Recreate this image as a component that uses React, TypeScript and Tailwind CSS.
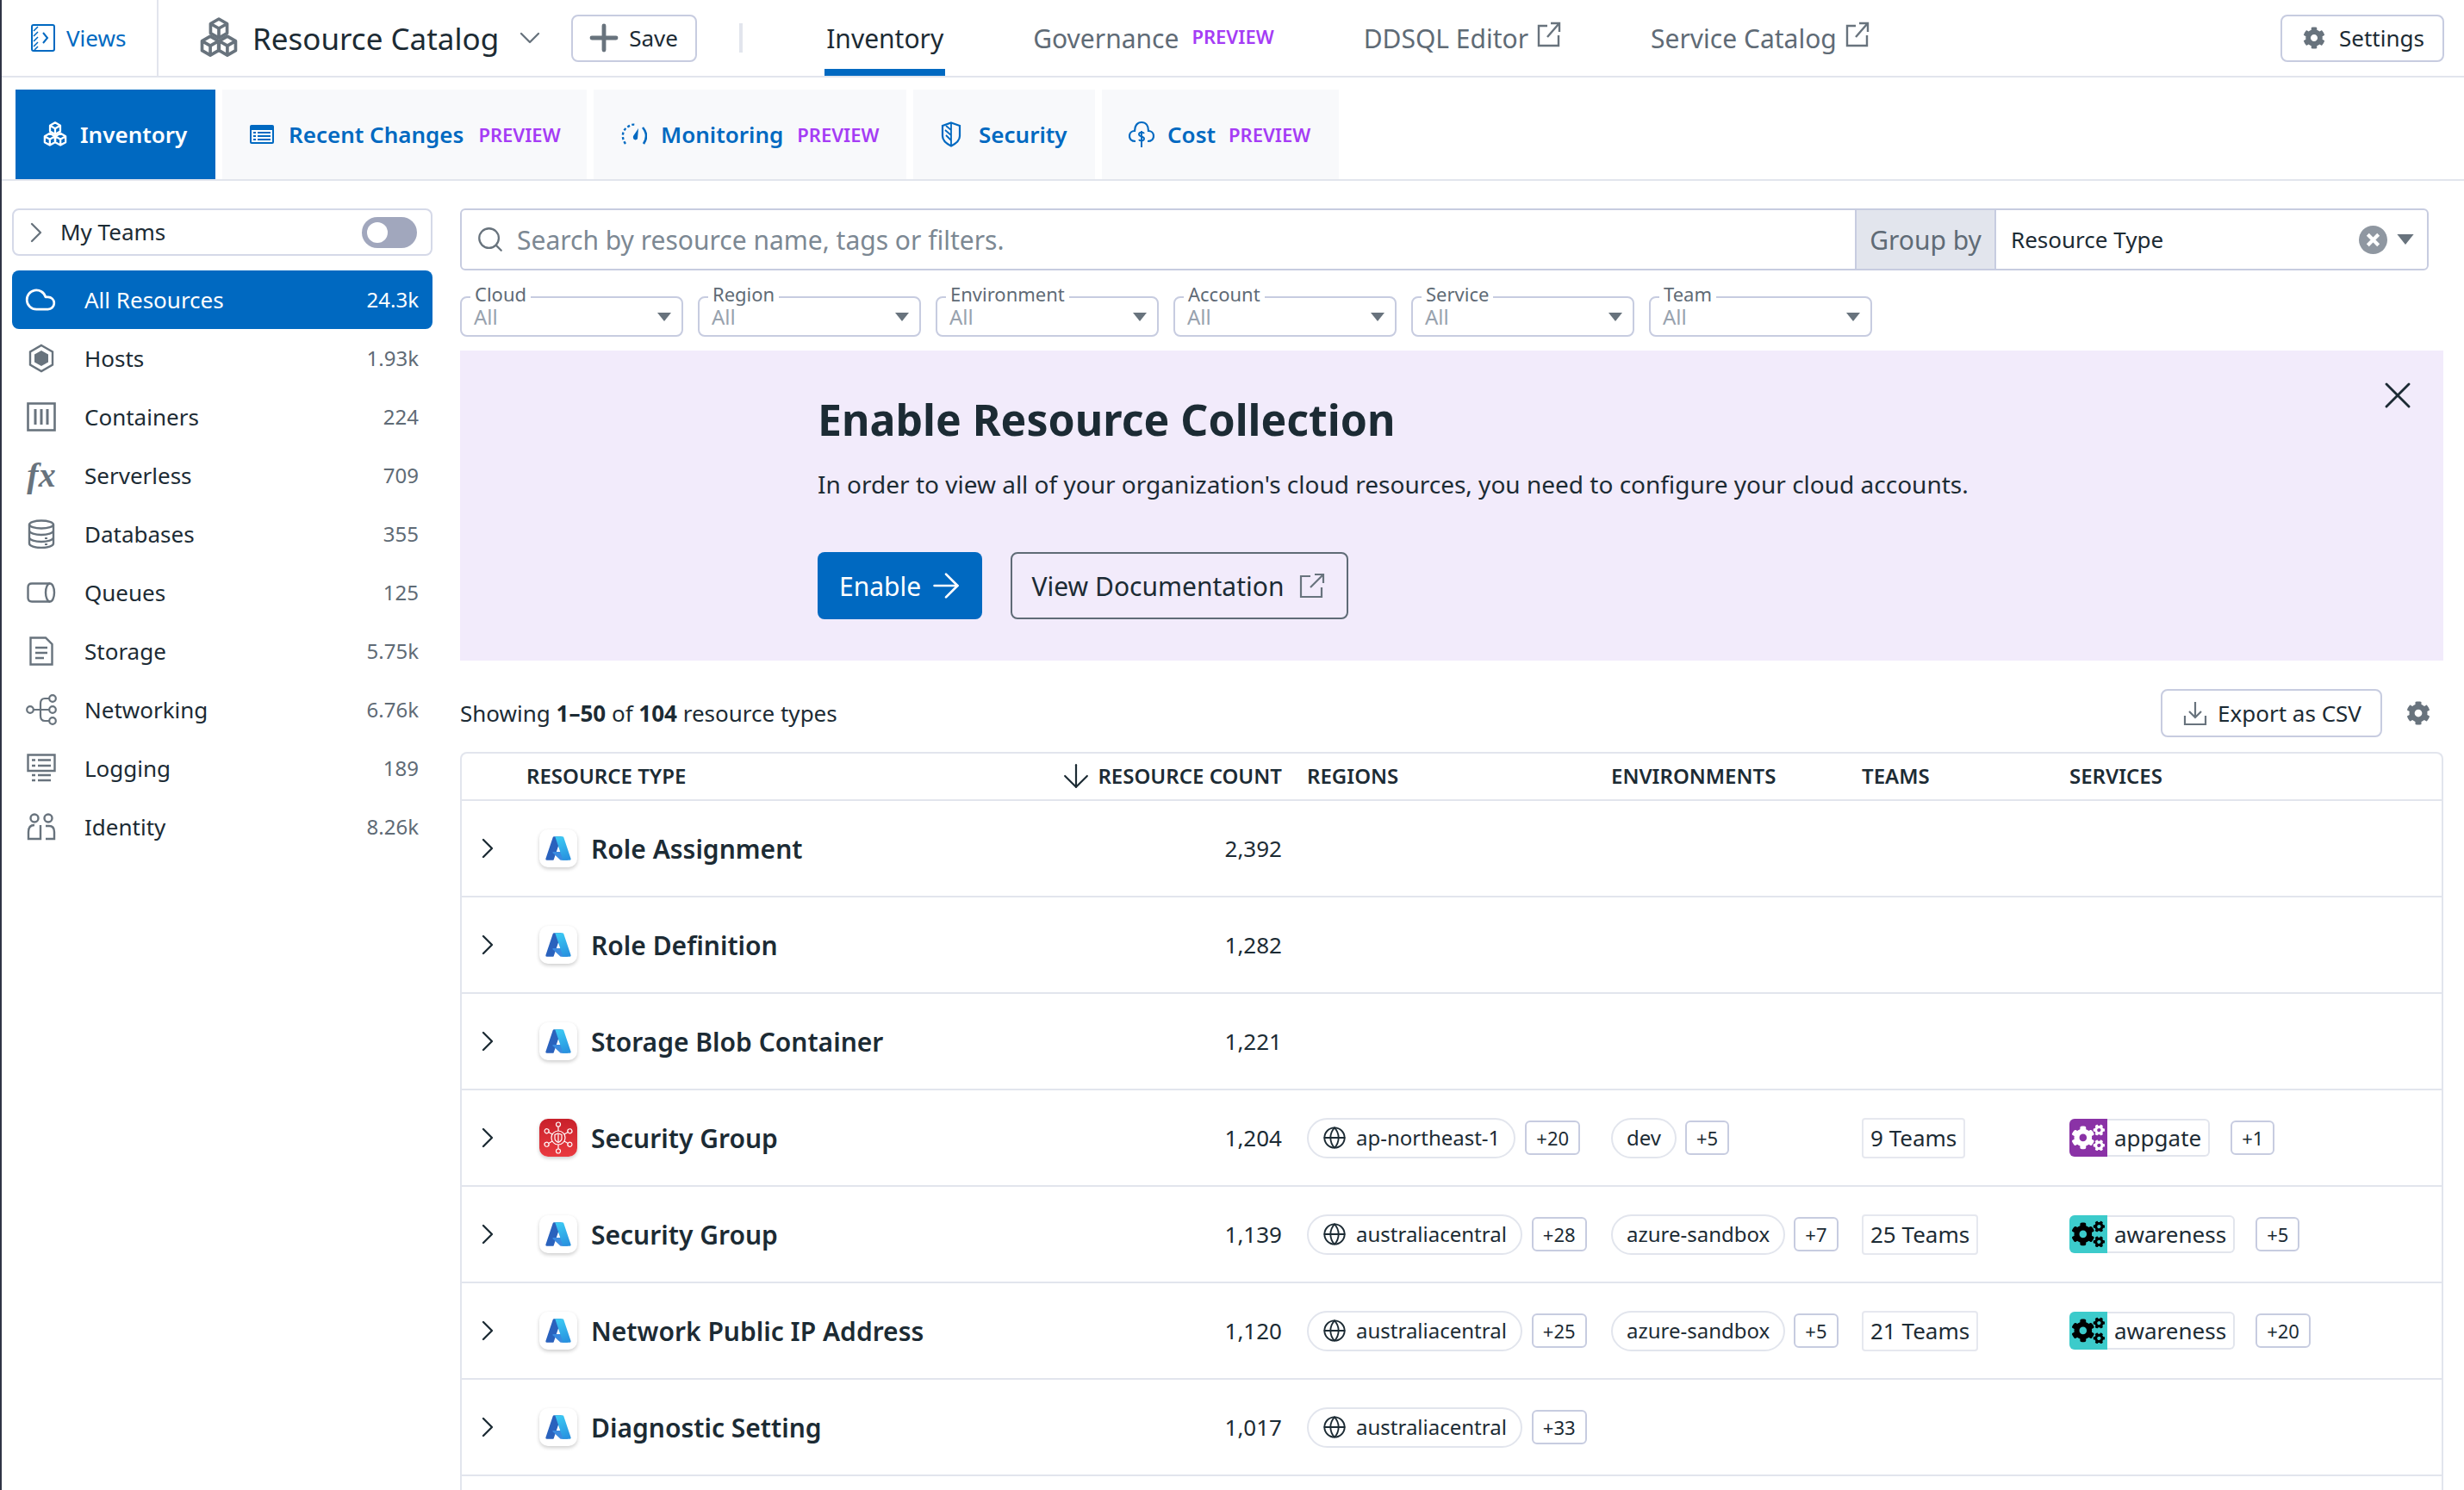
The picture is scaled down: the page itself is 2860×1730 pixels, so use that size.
import { ChevronDown, ChevronRight, Cloud, Globe, Plus, Search, X, ArrowRight, ArrowDown } from "lucide-react";
import { FaCog, FaCogs } from "react-icons/fa";

const ink = "text-[#1c2b34]";

function cubePath(cx: number, cy: number, r: number) {
  const w = r * 0.87;
  const h = r * 0.5;
  return `M${cx} ${cy - r}L${cx + w} ${cy - h}V${cy + h}L${cx} ${cy + r}L${cx - w} ${cy + h}V${cy - h}Z M${cx - w} ${cy - h}L${cx} ${cy}L${cx + w} ${cy - h} M${cx} ${cy}V${cy + r}`;
}

function CubesIcon({ className }: { className?: string }) {
  return (
    <svg viewBox="0 0 24 28" fill="none" stroke="currentColor" strokeWidth="2" strokeLinejoin="round" className={className}>
      <path d={cubePath(12, 8, 6)} />
      <path d={cubePath(6.6, 19, 6)} />
      <path d={cubePath(17.4, 19, 6)} />
    </svg>
  );
}

function ExternalIcon() {
  return (
    <svg viewBox="0 0 28 30" fill="none" stroke="#68737d" strokeWidth="2.4" className="w-[28px] h-[30px] mb-[8px] ml-[10px]">
      <path d="M12 5H2V28H25V16" />
      <path d="M12 18L25 3M16 2H26V12" />
    </svg>
  );
}

function Triangle({ className }: { className?: string }) {
  return (
    <svg viewBox="0 0 16 10" className={className}>
      <path d="M0 0H16L8 10Z" fill="#68737d" />
    </svg>
  );
}

function Preview() {
  return <span className="text-[22px] font-semibold text-[#a53cf5] leading-none">PREVIEW</span>;
}

function ViewsIcon() {
  return (
    <svg viewBox="0 0 28 32" fill="none" className="w-[28px] h-[32px]">
      <rect x="1" y="1" width="26" height="30" rx="2" stroke="#0069c1" strokeWidth="2" />
      <path d="M3 8L8 3M3 14L8 9M3 20L8 15M3 26L8 21M4 30L8 26" stroke="#0069c1" strokeWidth="1.5" />
      <path d="M14 10L19 16L14 22" stroke="#0069c1" strokeWidth="2" />
    </svg>
  );
}

function ListIcon() {
  return (
    <svg viewBox="0 0 28 22" className="w-[28px] h-[22px]">
      <rect width="28" height="22" rx="2" fill="#0069c1" />
      <rect x="2" y="6" width="24" height="14" fill="#fff" />
      <path d="M4 9H7M9 9H24M4 13H7M9 13H24M4 17H7M9 17H24" stroke="#0069c1" strokeWidth="2" />
    </svg>
  );
}

function GaugeIcon() {
  return (
    <svg viewBox="0 0 30 28" fill="none" className="w-[30px] h-[28px]">
      <path d="M5 25C0 18 1 9 8 5C11 3 14 2 17 3" stroke="#0069c1" strokeWidth="2.4" strokeDasharray="3 2.5" />
      <path d="M25 6C30 12 30 19 26 25" stroke="#0069c1" strokeWidth="2.6" />
      <path d="M20 7L14 16C13 20 17 22 19 19Z" fill="#0069c1" />
    </svg>
  );
}

function ShieldIcon() {
  return (
    <svg viewBox="0 0 24 30" fill="none" stroke="#0069c1" strokeWidth="2.2" className="w-[24px] h-[30px]">
      <path d="M12 1.5L22 5V17C22 23 17 26 12 28.5C7 26 2 23 2 17V5Z" />
      <path d="M12 2V28M12 10L6 5M12 16L5 10M12 22L6 16" strokeWidth="1.8" />
    </svg>
  );
}

function CostIcon() {
  return (
    <svg viewBox="0 0 30 32" fill="none" stroke="#0069c1" strokeWidth="2.2" className="w-[30px] h-[32px]">
      <path d="M8 24C3 24 1 21 1 18C1 14 4 12 7 12C7 6 10 2 15 2C20 2 23 6 23 12C26 12 29 14 29 18C29 21 27 24 22 24" />
      <path d="M18 15C17 13 12 13 12 16C12 19 18 18 18 21C18 24 13 24 12 22M15 12V26M15 26V31" strokeWidth="1.9" />
    </svg>
  );
}

const gray = "#68737d";

const sideIcons: Record<string, React.ReactNode> = {
  Hosts: (
    <svg viewBox="0 0 32 34" className="w-[32px] h-[34px]">
      <path d="M16 2L29 9.5V24.5L16 32L3 24.5V9.5Z" fill="none" stroke={gray} strokeWidth="2.4" />
      <path d="M16 8L24 12.5V21.5L16 26L8 21.5V12.5Z" fill={gray} />
    </svg>
  ),
  Containers: (
    <svg viewBox="0 0 34 34" fill="none" stroke={gray} className="w-[34px] h-[34px]">
      <rect x="1.5" y="1.5" width="31" height="31" strokeWidth="2.6" />
      <path d="M10 8V26M17 8V26M24 8V26" strokeWidth="3" />
    </svg>
  ),
  Databases: (
    <svg viewBox="0 0 32 34" fill="none" stroke={gray} strokeWidth="2.4" className="w-[32px] h-[34px]">
      <ellipse cx="16" cy="6" rx="14" ry="4.5" />
      <path d="M2 6V28C2 31 9 33 16 33C23 33 30 31 30 28V6M2 13C2 16 9 18 16 18C23 18 30 16 30 13M2 21C2 24 9 26 16 26C23 26 30 24 30 21" />
      <path d="M20 22H23M20 29H23" strokeWidth="2" />
    </svg>
  ),
  Queues: (
    <svg viewBox="0 0 34 24" fill="none" stroke={gray} strokeWidth="2.4" className="w-[34px] h-[24px]">
      <path d="M27 1.5H6C3 1.5 1.5 3 1.5 6V18C1.5 21 3 22.5 6 22.5H27" />
      <ellipse cx="27" cy="12" rx="5" ry="10.5" />
    </svg>
  ),
  Storage: (
    <svg viewBox="0 0 28 34" fill="none" stroke={gray} strokeWidth="2.4" className="w-[28px] h-[34px]">
      <path d="M1.5 1.5H19L26.5 9V32.5H1.5Z" />
      <path d="M7 13H21M7 19H21M7 25H17" />
    </svg>
  ),
  Networking: (
    <svg viewBox="0 0 36 36" fill="none" stroke={gray} strokeWidth="2.2" className="w-[36px] h-[36px]">
      <circle cx="5" cy="18" r="3.8" />
      <circle cx="31" cy="5" r="3.8" />
      <circle cx="31" cy="18" r="3.8" />
      <circle cx="31" cy="31" r="3.8" />
      <path d="M9 18H27M27 5H22C18 5 17 8 17 11V25C17 28 18 31 22 31H27" />
    </svg>
  ),
  Logging: (
    <svg viewBox="0 0 34 34" fill="none" stroke={gray} strokeWidth="2.4" className="w-[34px] h-[34px]">
      <path d="M1.5 1.5H32.5V20H1.5Z" />
      <path d="M6 7.5H10M13 7.5H28M6 14H10M13 14H28M6 25H10M13 25H28M6 31H10M13 31H28" />
    </svg>
  ),
  Identity: (
    <svg viewBox="0 0 34 32" fill="none" stroke={gray} strokeWidth="2.4" className="w-[34px] h-[32px]">
      <circle cx="9" cy="6" r="4.5" />
      <circle cx="25" cy="6" r="4.5" />
      <path d="M9 14C4 14 2 17 2 22V30H16V14M22 15H26C30 15 32 18 32 22V30H22" />
    </svg>
  ),
};

const sideItems = [
  { label: "Hosts", count: "1.93k" },
  { label: "Containers", count: "224" },
  { label: "Serverless", count: "709" },
  { label: "Databases", count: "355" },
  { label: "Queues", count: "125" },
  { label: "Storage", count: "5.75k" },
  { label: "Networking", count: "6.76k" },
  { label: "Logging", count: "189" },
  { label: "Identity", count: "8.26k" },
];

function AzureIcon() {
  return (
    <svg viewBox="0 0 96 96" className="w-[32px] h-[32px]">
      <defs>
        <linearGradient id="az-b" x1="46" y1="7" x2="76" y2="87" gradientUnits="userSpaceOnUse">
          <stop offset="0" stopColor="#3ccbf4" />
          <stop offset="1" stopColor="#2892df" />
        </linearGradient>
      </defs>
      <path d="M33.338 6.544h26.038l-27.03 80.087a4.152 4.152 0 0 1-3.933 2.824H8.149a4.145 4.145 0 0 1-3.928-5.47L29.404 9.368a4.152 4.152 0 0 1 3.934-2.825z" fill="#2a62bd" />
      <path d="M71.175 60.261h-41.29a1.911 1.911 0 0 0-1.305 3.309l26.532 24.764a4.171 4.171 0 0 0 2.846 1.121h23.38z" fill="#3b8be0" />
      <path d="M66.595 9.364a4.145 4.145 0 0 0-3.928-2.82H33.648a4.146 4.146 0 0 1 3.928 2.82l25.184 74.62a4.146 4.146 0 0 1-3.928 5.472h29.02a4.146 4.146 0 0 0 3.927-5.472z" fill="url(#az-b)" />
    </svg>
  );
}

function AwsIcon() {
  const spokes = [0, 60, 120, 180, 240, 300];
  return (
    <svg viewBox="0 0 44 44" fill="none" stroke="#fff" strokeWidth="1.2" className="w-[44px] h-[44px]">
      {spokes.map((a) => (
        <g key={a} transform={`rotate(${a} 22 22)`}>
          <path d="M22 14V9" />
          <circle cx="22" cy="6.5" r="2.5" />
        </g>
      ))}
      <circle cx="22" cy="22" r="8" />
      <path d="M22 17L26 18.5V23C26 25 24 26.5 22 27.5C20 26.5 18 25 18 23V18.5Z" />
      <path d="M22 18V27" />
    </svg>
  );
}

type Row = {
  name: string;
  count: string;
  aws?: boolean;
  region?: string;
  regionMore?: string;
  env?: string;
  envMore?: string;
  teams?: string;
  service?: string;
  serviceDark?: boolean;
  serviceMore?: string;
};

const rows: Row[] = [
  { name: "Role Assignment", count: "2,392" },
  { name: "Role Definition", count: "1,282" },
  { name: "Storage Blob Container", count: "1,221" },
  { name: "Security Group", count: "1,204", aws: true, region: "ap-northeast-1", regionMore: "+20", env: "dev", envMore: "+5", teams: "9 Teams", service: "appgate", serviceMore: "+1" },
  { name: "Security Group", count: "1,139", region: "australiacentral", regionMore: "+28", env: "azure-sandbox", envMore: "+7", teams: "25 Teams", service: "awareness", serviceDark: true, serviceMore: "+5" },
  { name: "Network Public IP Address", count: "1,120", region: "australiacentral", regionMore: "+25", env: "azure-sandbox", envMore: "+5", teams: "21 Teams", service: "awareness", serviceDark: true, serviceMore: "+20" },
  { name: "Diagnostic Setting", count: "1,017", region: "australiacentral", regionMore: "+33" },
];

function More({ label }: { label: string }) {
  return (
    <span className={`h-[40px] flex items-center px-[11px] rounded-[6px] border-2 border-[#c7cce0] text-[22px] ${ink}`}>
      {label}
    </span>
  );
}

function Filter({ label }: { label: string }) {
  return (
    <div className="relative w-[259px] h-[47px] rounded-[8px] border-2 border-[#c7cce0] flex items-center justify-between pl-[14px] pr-[12px]">
      <span className="absolute left-[10px] -top-[18px] bg-white px-[5px] text-[22px] leading-[26px] text-[#5f6b76]">{label}</span>
      <span className="text-[24px] leading-[30px] text-[#98a2ae]">All</span>
      <Triangle className="w-[16px] h-[10px]" />
    </div>
  );
}

export default function App() {
  return (
    <div className={`w-[2860px] h-[1730px] overflow-hidden bg-white border-l-2 border-[#2f3445] flex flex-col font-['Noto_Sans',sans-serif] ${ink}`}>
      {/* Top bar */}
      <div className="h-[90px] shrink-0 border-b-2 border-[#e2e5ed] flex items-center">
        <div className="w-[182px] h-full border-r-2 border-[#e2e5ed] flex items-center gap-[13px] pl-[34px]">
          <ViewsIcon />
          <span className="text-[26px] text-[#0069c1]">Views</span>
        </div>
        <CubesIcon className="w-[44px] h-[52px] ml-[48px] text-[#68737d]" />
        <span className="ml-[17px] pt-[2px] text-[35px]">Resource Catalog</span>
        <ChevronDown className="w-[40px] h-[40px] ml-[16px] text-[#68737d]" strokeWidth={1.4} />
        <button className="ml-[28px] w-[146px] h-[55px] rounded-[8px] border-2 border-[#c7cce0] flex items-center gap-[5px] pl-[12px] text-[26px]">
          <Plus className="w-[48px] h-[48px] text-[#68737d]" strokeWidth={2.4} />
          Save
        </button>
        <div className="ml-[49px] w-[4px] h-[34px] bg-[#e2e5ed]" />
        <div className="ml-[95px] w-[140px] h-full flex justify-center items-center relative">
          <span className="text-[30px]">Inventory</span>
          <div className="absolute left-0 right-0 top-[80px] h-[8px] bg-[#0069c1]" />
        </div>
        <span className="ml-[102px] text-[30px] text-[#5f6b76]">Governance</span>
        <span className="ml-[15px]">
          <Preview />
        </span>
        <span className="ml-[104px] text-[30px] text-[#5f6b76]">DDSQL Editor</span>
        <ExternalIcon />
        <span className="ml-[104px] text-[30px] text-[#5f6b76]">Service Catalog</span>
        <ExternalIcon />
        <button className="ml-auto mr-[23px] w-[190px] h-[55px] rounded-[8px] border-2 border-[#c7cce0] flex items-center justify-center gap-[16px] pl-[3px] text-[26px]">
          <FaCog className="w-[26px] h-[26px] text-[#68737d]" />
          Settings
        </button>
      </div>

      {/* Sub tabs */}
      <div className="h-[120px] shrink-0 pt-[14px] border-b-2 border-[#e2e5ed] flex gap-[8px] pl-[16px]">
        <div className="w-[232px] bg-[#0069c1] text-white flex items-center gap-[15px] pl-[32px] text-[26px] font-semibold">
          <CubesIcon className="w-[28px] h-[32px] text-white" />
          Inventory
        </div>
        <div className="w-[423px] bg-[#f8f9fb] text-[#0069c1] flex items-center gap-[17px] pl-[32px] text-[26px] font-semibold">
          <ListIcon />
          <span>Recent Changes</span>
          <Preview />
        </div>
        <div className="w-[363px] bg-[#f8f9fb] text-[#0069c1] flex items-center gap-[16px] pl-[32px] text-[26px] font-semibold">
          <GaugeIcon />
          <span>Monitoring</span>
          <Preview />
        </div>
        <div className="w-[211px] bg-[#f8f9fb] text-[#0069c1] flex items-center gap-[20px] pl-[32px] text-[26px] font-semibold">
          <ShieldIcon />
          <span>Security</span>
        </div>
        <div className="w-[275px] bg-[#f8f9fb] text-[#0069c1] flex items-center gap-[15px] pl-[31px] text-[26px] font-semibold">
          <CostIcon />
          <span>Cost</span>
          <Preview />
        </div>
      </div>

      <div className="flex-1 min-h-0 flex pl-[12px] pr-[24px] pt-[32px] gap-[32px]">
        {/* Sidebar */}
        <aside className="w-[488px] shrink-0">
          <div className="h-[55px] rounded-[8px] border-2 border-[#d5d9e8] flex items-center pl-[6px] pr-[16px]">
            <ChevronRight className="w-[40px] h-[40px] text-[#68737d]" strokeWidth={1.4} />
            <span className="ml-[8px] text-[26px]">My Teams</span>
            <div className="ml-auto w-[64px] h-[36px] rounded-full bg-[#a1a7bd] pl-[6px] flex items-center">
              <div className="w-[24px] h-[24px] rounded-full bg-white" />
            </div>
          </div>
          <div className="mt-[17px] h-[68px] rounded-[8px] bg-[#0069c1] text-white flex items-center pl-[14px] pr-[16px]">
            <Cloud className="w-[38px] h-[38px]" strokeWidth={1.7} />
            <span className="ml-[32px] text-[26px]">All Resources</span>
            <span className="ml-auto text-[24px]">24.3k</span>
          </div>
          {sideItems.map((item) => (
            <div key={item.label} className="h-[68px] flex items-center pl-[16px] pr-[16px]">
              <div className="w-[36px] flex justify-center">
                {item.label === "Serverless" ? (
                  <span className="font-['Liberation_Serif',serif] italic font-bold text-[40px] leading-none text-[#68737d]">fx</span>
                ) : (
                  sideIcons[item.label]
                )}
              </div>
              <span className="ml-[32px] text-[26px]">{item.label}</span>
              <span className="ml-auto text-[24px] text-[#5f6b76]">{item.count}</span>
            </div>
          ))}
        </aside>

        {/* Main */}
        <main className="flex-1 min-w-0 flex flex-col">
          <div className="h-[72px] shrink-0 pr-[17px]">
            <div className="h-full rounded-[6px] border-2 border-[#c7cce0] flex items-center">
              <Search className="ml-[16px] w-[34px] h-[34px] text-[#68737d]" strokeWidth={1.6} />
              <span className="ml-[14px] text-[30px] text-[#7c8893]">Search by resource name, tags or filters.</span>
              <div className="ml-auto w-[164px] h-full bg-[#e2e5ed] border-x-2 border-[#c7cce0] flex items-center justify-center text-[30px] text-[#5f6b76]">
                Group by
              </div>
              <span className="w-[500px] flex items-center pl-[17px] pr-[15px] text-[26px]">
                Resource Type
                <svg viewBox="0 0 32 32" className="ml-auto mr-[1px] w-[33px] h-[33px]">
                  <circle cx="16" cy="16" r="16" fill="#8f97a1" />
                  <path d="M10 10L22 22M22 10L10 22" stroke="#fff" strokeWidth="4" />
                </svg>
                <Triangle className="ml-[10px] w-[20px] h-[12px]" />
              </span>
            </div>
          </div>

          <div className="mt-[30px] flex gap-[17px] shrink-0">
            {["Cloud", "Region", "Environment", "Account", "Service", "Team"].map((f) => (
              <Filter key={f} label={f} />
            ))}
          </div>

          <div className="relative mt-[16px] shrink-0 bg-[#f2ebfb] pl-[415px] pt-[47px] pb-[48px]">
            <X className="absolute right-[27px] top-[26px] w-[52px] h-[52px]" strokeWidth={1.3} />
            <h1 className="text-[50px] leading-[66px] font-bold">Enable Resource Collection</h1>
            <p className="mt-[23px] text-[28px] leading-[38px]">
              In order to view all of your organization's cloud resources, you need to configure your cloud accounts.
            </p>
            <div className="mt-[60px] flex gap-[33px]">
              <button className="w-[191px] h-[78px] rounded-[8px] bg-[#0069c1] text-white text-[30px] flex items-center gap-[6px] pl-[25px]">
                Enable
                <ArrowRight className="w-[46px] h-[46px]" strokeWidth={1.4} />
              </button>
              <button className="w-[392px] h-[78px] rounded-[8px] border-2 border-[#5f6b76] text-[30px] flex items-center justify-center gap-[18px] pr-[2px]">
                View Documentation
                <svg viewBox="0 0 30 30" fill="none" stroke="#68737d" strokeWidth="2.2" className="w-[30px] h-[30px]">
                  <path d="M13 4H2V28H26V17" />
                  <path d="M13 17L27 3M18 2H28V12" />
                </svg>
              </button>
            </div>
          </div>

          <div className="mt-[33px] h-[56px] shrink-0 flex items-center">
            <p className="text-[26px]">
              Showing <b className="font-bold">1–50</b> of <b className="font-bold">104</b> resource types
            </p>
            <button className="ml-auto w-[257px] h-[56px] rounded-[8px] border-2 border-[#c7cce0] flex items-center justify-center gap-[12px] pl-[2px] text-[26px]">
              <svg viewBox="0 0 28 30" fill="none" stroke="#68737d" strokeWidth="2.2" className="w-[28px] h-[30px]">
                <path d="M14 2V20M7 13L14 20L21 13M2 18V28H26V18" />
              </svg>
              Export as CSV
            </button>
            <FaCog className="ml-[28px] mr-[15px] w-[28px] h-[28px] text-[#68737d]" />
          </div>

          {/* Table */}
          <div className="mt-[17px] flex-1 min-h-0 rounded-t-[8px] border-2 border-b-0 border-[#e2e5ed]">
            <div className="h-[55px] pb-[2px] border-b-2 border-[#e2e5ed] grid grid-cols-[981px_353px_291px_241px_1fr] items-center text-[24px] font-semibold">
              <div className="flex items-center pl-[75px] pr-[29px]">
                <span>RESOURCE TYPE</span>
                <ArrowDown className="ml-auto w-[44px] h-[44px]" strokeWidth={1.2} />
                <span className="ml-[3px]">RESOURCE COUNT</span>
              </div>
              <span>REGIONS</span>
              <span>ENVIRONMENTS</span>
              <span>TEAMS</span>
              <span>SERVICES</span>
            </div>
            {rows.map((r, i) => (
              <div key={i} className="h-[112px] border-b-2 border-[#e2e5ed] grid grid-cols-[981px_353px_291px_241px_1fr] items-center text-[26px]">
                <div className="flex items-center pl-[10px] pr-[29px]">
                  <ChevronRight className="w-[40px] h-[40px]" strokeWidth={1.4} />
                  <div className={`ml-[40px] w-[44px] h-[44px] rounded-[10px] shadow-[0_2px_4px_rgba(0,0,0,0.2)] flex items-center justify-center ${r.aws ? "bg-gradient-to-b from-[#c8202b] to-[#ea3a40]" : "bg-white"}`}>
                    {r.aws ? <AwsIcon /> : <AzureIcon />}
                  </div>
                  <span className="ml-[16px] text-[30px] font-semibold">{r.name}</span>
                  <span className="ml-auto">{r.count}</span>
                </div>
                <div className="flex items-center gap-[11px]">
                  {r.region && (
                    <>
                      <span className="h-[47px] rounded-full border-2 border-[#e2e5ed] flex items-center gap-[11px] pl-[16px] pr-[16px] text-[24px]">
                        <Globe className="w-[28px] h-[28px]" strokeWidth={1.6} />
                        {r.region}
                      </span>
                      <More label={r.regionMore!} />
                    </>
                  )}
                </div>
                <div className="flex items-center gap-[10px]">
                  {r.env && (
                    <>
                      <span className="h-[47px] rounded-full border-2 border-[#e2e5ed] flex items-center px-[16px] text-[24px]">{r.env}</span>
                      <More label={r.envMore!} />
                    </>
                  )}
                </div>
                <div className="flex items-center">
                  {r.teams && (
                    <span className="h-[47px] rounded-[4px] border-2 border-[#e6e8ef] flex items-center px-[8px]">{r.teams}</span>
                  )}
                </div>
                <div className="flex items-center gap-[24px]">
                  {r.service && (
                    <>
                      <span className="h-[44px] rounded-[6px] border-2 border-l-0 border-[#e2e5ed] flex items-center pr-[8px]">
                        <span className={`w-[44px] h-[44px] rounded-l-[6px] flex items-center justify-center ${r.serviceDark ? "bg-[#3ccbcb] text-black" : "bg-[#8a32a6] text-white"}`}>
                          <FaCogs className="w-[38px] h-[38px]" />
                        </span>
                        <span className="ml-[8px]">{r.service}</span>
                      </span>
                      <More label={r.serviceMore!} />
                    </>
                  )}
                </div>
              </div>
            ))}
          </div>
        </main>
      </div>
    </div>
  );
}
